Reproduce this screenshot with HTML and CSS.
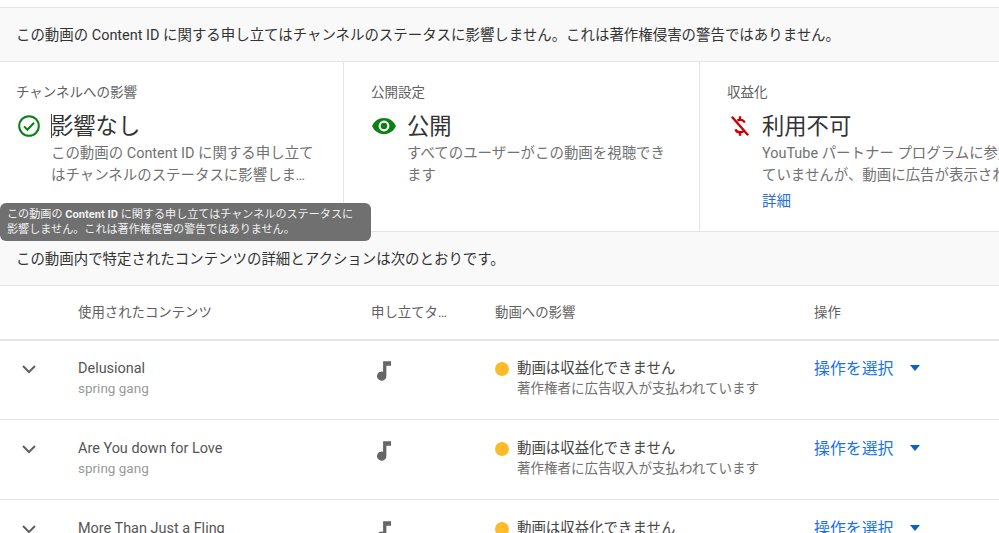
FILE: index.html
```html
<!DOCTYPE html>
<html lang="ja">
<head>
<meta charset="utf-8">
<title>Content ID</title>
<link rel="stylesheet" href="styles.css">
</head>
<body>
<div class="page">
  <div class="banner banner-top">この動画の Content ID に関する申し立てはチャンネルのステータスに影響しません。これは著作権侵害の警告ではありません。</div>
  <section class="cards">
    <article class="card card-a">
      <div class="card-label">チャンネルへの影響</div>
      <div class="card-head">
        <svg class="card-icon" viewBox="0 0 24 24"><circle cx="12" cy="12" r="9.8" fill="none" stroke="#0a8015" stroke-width="2"/><path d="M7 12.4l3.4 3.4 6.6-7" fill="none" stroke="#0a8015" stroke-width="2"/></svg>
        <h2 class="card-title"><span class="caret"></span>影響なし</h2>
      </div>
      <p class="card-text clamp">この動画の Content ID に関する申し立てはチャンネルのステータスに影響しません。これは著作権侵害の警告ではありません。</p>
    </article>
    <article class="card card-b">
      <div class="card-label">公開設定</div>
      <div class="card-head">
        <svg class="card-icon" viewBox="0 0 24 24"><path fill="#0a8015" d="M12 4.500C7 4.500 2.700 7.600 1 12c1.700 4.400 6 7.500 11 7.500s9.300-3.100 11-7.500c-1.700-4.400-6-7.500-11-7.500zM12 17a5 5 0 1 1 0-10 5 5 0 0 1 0 10zm0-8a3 3 0 1 0 0 6 3 3 0 0 0 0-6z"/></svg>
        <h2 class="card-title">公開</h2>
      </div>
      <p class="card-text">すべてのユーザーがこの動画を視聴できます</p>
    </article>
    <article class="card card-c">
      <div class="card-label">収益化</div>
      <div class="card-head">
        <svg class="card-icon" viewBox="0 0 24 24"><path fill="none" stroke="#cc0000" stroke-width="2.200" d="M4.500 3.500l15 17M12 3v3M12 18v3M16 9c0-1.600-1.400-2.700-4-2.700-1 0-1.800.2-2.500.5M8 15c.2 1.700 1.700 2.700 4 2.700 1.200 0 2.200-.2 3-.7"/></svg>
        <h2 class="card-title">利用不可</h2>
      </div>
      <p class="card-text clamp">YouTube パートナー プログラムに参加していませんが、動画に広告が表示される場合があります</p>
      <a class="card-link" href="#">詳細</a>
    </article>
  </section>
  <div class="banner banner-mid">この動画内で特定されたコンテンツの詳細とアクションは次のとおりです。</div>
  <div class="row row-head">
    <div></div>
    <div>使用されたコンテンツ</div>
    <div class="head-ellipsis">申し立てタイプ</div>
    <div>動画への影響</div>
    <div>操作</div>
  </div>
  <div class="row row-item">
    <div class="cell-exp"><svg class="chev" viewBox="0 0 16 10"><path d="M2 2l6 6 6-6" fill="none" stroke="#606060" stroke-width="2"/></svg></div>
    <div><div class="item-title">Delusional</div><div class="item-sub">spring gang</div></div>
    <div><svg class="note" viewBox="0 0 16 22"><path fill="#666" d="M6.500 1H15v5h-5v11a5 5 0 1 1-3.500-4.800z"/></svg></div>
    <div class="impact"><span class="dot"></span><div><div class="impact-title">動画は収益化できません</div><div class="impact-sub">著作権者に広告収入が支払われています</div></div></div>
    <div class="action"><a class="action-link" href="#">操作を選択</a><span class="tri"></span></div>
  </div>
  <div class="row row-item">
    <div class="cell-exp"><svg class="chev" viewBox="0 0 16 10"><path d="M2 2l6 6 6-6" fill="none" stroke="#606060" stroke-width="2"/></svg></div>
    <div><div class="item-title">Are You down for Love</div><div class="item-sub">spring gang</div></div>
    <div><svg class="note" viewBox="0 0 16 22"><path fill="#666" d="M6.500 1H15v5h-5v11a5 5 0 1 1-3.500-4.800z"/></svg></div>
    <div class="impact"><span class="dot"></span><div><div class="impact-title">動画は収益化できません</div><div class="impact-sub">著作権者に広告収入が支払われています</div></div></div>
    <div class="action"><a class="action-link" href="#">操作を選択</a><span class="tri"></span></div>
  </div>
  <div class="row row-item">
    <div class="cell-exp"><svg class="chev" viewBox="0 0 16 10"><path d="M2 2l6 6 6-6" fill="none" stroke="#606060" stroke-width="2"/></svg></div>
    <div><div class="item-title">More Than Just a Fling</div><div class="item-sub">spring gang</div></div>
    <div><svg class="note" viewBox="0 0 16 22"><path fill="#666" d="M6.500 1H15v5h-5v11a5 5 0 1 1-3.500-4.800z"/></svg></div>
    <div class="impact"><span class="dot"></span><div><div class="impact-title">動画は収益化できません</div><div class="impact-sub">著作権者に広告収入が支払われています</div></div></div>
    <div class="action"><a class="action-link" href="#">操作を選択</a><span class="tri"></span></div>
  </div>
  <div class="tooltip">この動画の <b>Content ID</b> に関する申し立てはチャンネルのステータスに影響しません。これは著作権侵害の警告ではありません。</div>
</div>
</body>
</html>
```
FILE: styles.css
```css
* { box-sizing: border-box; }
html, body { margin: 0; height: 100%; overflow: hidden; background: #fff; }
body { font-family: Roboto, "Noto Sans CJK JP", sans-serif; color: #282828; }
.page { position: relative; width: 999px; height: 533px; overflow: hidden; padding-top: 7px; }

.banner { display: flex; align-items: center; padding-left: 16px; background: #f9f9f9; font-size: 14.45px; color: #333; border-top: 1px solid #e5e5e5; }
.banner-top { height: 55px; border-bottom: 1px solid #e5e5e5; padding-bottom: 3px; }
.banner-mid { height: 53px; border-top: 0; border-bottom: 0; padding-bottom: 3px; }

.cards { display: grid; grid-template-columns: 344px 356px 400px; height: 170px; border-bottom: 1px solid #e5e5e5; }
.card { padding: 21px 16px 0; border-right: 1px solid #e5e5e5; min-width: 0; }
.card-b { padding-left: 27px; }
.card-c { padding-left: 27px; border-right: 0; }
.card-label { font-size: 13.5px; line-height: 19px; color: #606060; }
.card-head { display: flex; align-items: center; height: 30px; margin-top: 9px; }
.card-icon { width: 26px; height: 26px; margin-right: 10px; flex: none; }
.card-a .card-icon { width: 24px; height: 24px; margin-left: 1px; }
.card-c .card-icon { margin-right: 9px; }
.card-title { position: relative; margin: 0; font-size: 22.3px; font-weight: 400; line-height: 30px; color: #333; }
.caret { position: absolute; left: 0; top: 3px; width: 1px; height: 24px; background: #444; }
.card-text { margin: 2px 0 0 35px; font-size: 14.45px; line-height: 22px; color: #717171; width: 267px; }
.card-b .card-text { margin-left: 36px; }
.clamp { display: -webkit-box; -webkit-line-clamp: 2; -webkit-box-orient: vertical; overflow: hidden; }
.card-c .card-text { width: 272px; }
.card-link { display: block; margin: 5px 0 0 35px; font-size: 14.45px; line-height: 20px; color: #2a6fd0; text-decoration: none; }

.row { display: grid; grid-template-columns: 78px 293px 124px 319px 185px; border-top: 1px solid #e5e5e5; }
.row-head { height: 54px; align-items: center; font-size: 13.4px; color: #606060; padding-bottom: 3px; }
.head-ellipsis { width: 78px; white-space: nowrap; overflow: hidden; text-overflow: ellipsis; }
.row-item { height: 80px; padding-top: 18px; align-content: start; }
.row-head + .row-item { border-top-width: 2px; padding-top: 17px; }

.cell-exp { padding: 6px 0 0 21px; }
.chev { display: block; width: 16px; height: 10px; }
.item-title { font-size: 14.45px; line-height: 21px; color: #555; }
.item-sub { font-size: 13.5px; line-height: 19px; color: #999; }
.note { display: block; width: 15px; height: 21px; margin: 2px 0 0 6px; }

.impact { display: flex; }
.dot { width: 14px; height: 14px; margin-top: 4px; margin-right: 8px; border-radius: 50%; background: #fbbc27; flex: none; }
.impact-title { font-size: 14.45px; line-height: 21px; color: #444; white-space: nowrap; }
.impact-sub { font-size: 13.5px; line-height: 19px; color: #717171; white-space: nowrap; }

.action { display: flex; align-items: flex-start; }
.action-link { font-size: 15.900px; line-height: 21px; color: #1a73e8; text-decoration: none; }
.tri { width: 0; height: 0; margin: 7px 0 0 17px; border-left: 5.500px solid transparent; border-right: 5.500px solid transparent; border-top: 6px solid #065fd4; }

.tooltip { position: absolute; left: 0; top: 203px; width: 371px; height: 38px; padding: 4px 7px; border-radius: 6px; background: #707070; color: #f2f2f2; font-size: 11.1px; line-height: 15px; }
.tooltip b { font-weight: 700; }
```
